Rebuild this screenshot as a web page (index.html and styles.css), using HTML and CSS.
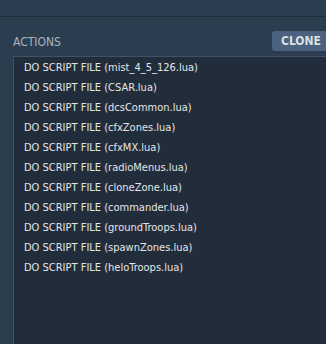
FILE: index.html
```html
<!DOCTYPE html>
<html>
<head>
<meta charset="utf-8">
<link rel="stylesheet" href="styles.css">
</head>
<body>
<div class="topbar"></div>
<div class="panel">
  <div class="header">
    <span class="label">ACTIONS</span>
    <button class="clone">CLONE</button>
  </div>
  <ul class="list">
    <li>DO SCRIPT FILE (mist_4_5_126.lua)</li>
    <li>DO SCRIPT FILE (CSAR.lua)</li>
    <li>DO SCRIPT FILE (dcsCommon.lua)</li>
    <li>DO SCRIPT FILE (cfxZones.lua)</li>
    <li>DO SCRIPT FILE (cfxMX.lua)</li>
    <li>DO SCRIPT FILE (radioMenus.lua)</li>
    <li>DO SCRIPT FILE (cloneZone.lua)</li>
    <li>DO SCRIPT FILE (commander.lua)</li>
    <li>DO SCRIPT FILE (groundTroops.lua)</li>
    <li>DO SCRIPT FILE (spawnZones.lua)</li>
    <li>DO SCRIPT FILE (heloTroops.lua)</li>
  </ul>
</div>
</body>
</html>
```
FILE: styles.css
```css
html, body {
  margin: 0;
  padding: 0;
  background: #2c3d50;
  width: 326px;
  height: 344px;
  overflow: hidden;
  font-family: "DejaVu Sans Condensed", "DejaVu Sans", sans-serif;
  font-stretch: condensed;
}
.topbar {
  height: 16px;
  border-bottom: 1px solid #1f2c3a;
}
.panel {
  padding: 14px 0 0 13px;
}
.header {
  display: flex;
  justify-content: space-between;
  align-items: center;
  height: 20px;
  margin-bottom: 5px;
}
.label {
  color: #a9b4bf;
  font-size: 12px;
  padding-top: 2px;
}
.clone {
  background: #4a627d;
  color: #d9dee3;
  border: none;
  border-radius: 3px 0 0 3px;
  font-family: "DejaVu Sans Condensed", "DejaVu Sans", sans-serif;
  font-stretch: condensed;
  font-weight: bold;
  font-size: 12px;
  height: 20px;
  width: 54px;
  padding: 0 0 0 9px;
  text-align: left;
}
.list {
  list-style: none;
  margin: 0;
  padding: 0;
  background: #222d3b;
  border-top: 1px solid #3f5368;
  border-left: 1px solid #3f5368;
  height: 300px;
}
.list li {
  height: 20px;
  line-height: 20px;
  padding-left: 10px;
  padding-top: 1px;
  margin-bottom: -1px;
  color: #e4e6e8;
  font-size: 11px;
  white-space: nowrap;
}
```
